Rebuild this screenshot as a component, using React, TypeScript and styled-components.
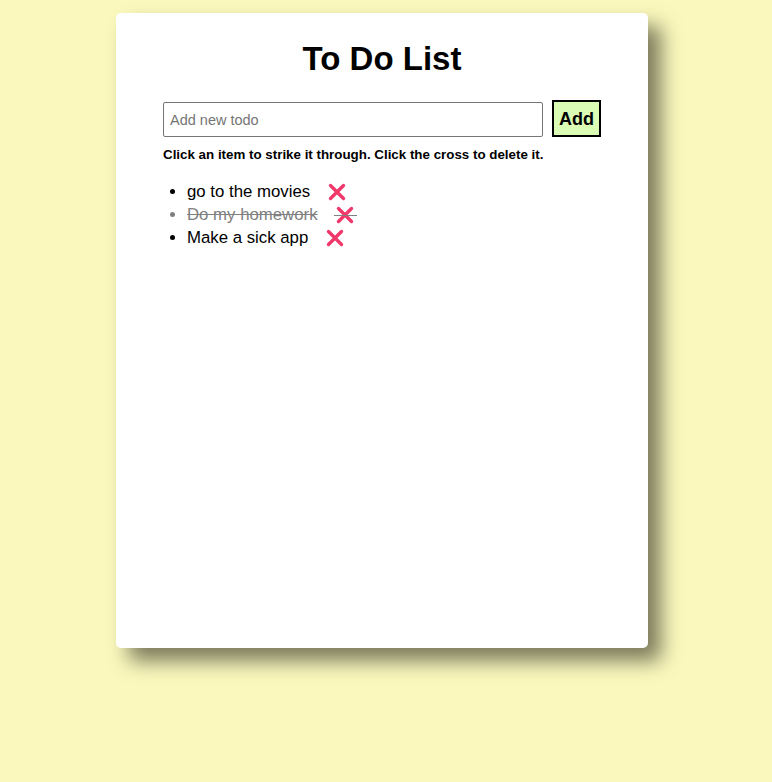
import React, { useState } from "react";
import styled, { createGlobalStyle } from "styled-components";

const GlobalStyle = createGlobalStyle`
  html, body {
    margin: 0;
    padding: 0;
    background: #fbf8bd;
    font-family: "Liberation Sans", Arial, sans-serif;
  }
`;

const Page = styled.div`
  min-height: 782px;
  padding-top: 13px;
  box-sizing: border-box;
`;

const Card = styled.div`
  width: 532px;
  height: 635px;
  margin-left: 116px;
  box-sizing: border-box;
  background: #ffffff;
  border-radius: 5px;
  padding: 27px 47px 0;
  box-shadow: 13px 13px 20px #7b7b5c;
`;

const Title = styled.h1`
  margin: 0;
  text-align: center;
  font-size: 33px;
  font-weight: bold;
  line-height: 37px;
  color: #000;
`;

const Form = styled.form`
  display: flex;
  align-items: flex-end;
  gap: 9px;
  margin-top: 23px;
`;

const Input = styled.input`
  flex: 1;
  height: 35px;
  box-sizing: border-box;
  border: 1px solid #767676;
  border-radius: 2px;
  padding: 0 6px;
  font-family: "Liberation Sans", Arial, sans-serif;
  font-size: 14.5px;
  color: #000;
  &::placeholder {
    color: #757575;
  }
`;

const AddButton = styled.button`
  height: 37px;
  box-sizing: border-box;
  border: 2px solid #000;
  border-radius: 0;
  background: #dafcb4;
  padding: 1px 5px 0;
  font-family: "Liberation Sans", Arial, sans-serif;
  font-size: 18px;
  font-weight: bold;
  color: #000;
  cursor: pointer;
`;

const Hint = styled.p`
  margin: 10px 0 0;
  font-size: 13.35px;
  line-height: 15px;
  font-weight: bold;
  color: #000;
`;

const List = styled.ul`
  margin: 18px 0 0;
  padding-left: 24px;
`;

const Item = styled.li<{ $done: boolean }>`
  font-size: 16.8px;
  line-height: 23px;
  color: ${(p) => (p.$done ? "#808080" : "#000")};
  cursor: pointer;
`;

const Text = styled.span<{ $done: boolean }>`
  text-decoration: ${(p) => (p.$done ? "line-through" : "none")};
`;

const Cross = styled.span<{ $done: boolean }>`
  position: relative;
  display: inline-block;
  margin-left: 16px;
  padding: 0 2px;
  height: 23px;
  vertical-align: top;
  svg {
    display: block;
    margin-top: 3px;
  }
  &::after {
    content: "";
    display: ${(p) => (p.$done ? "block" : "none")};
    position: absolute;
    left: 0;
    right: -1px;
    top: 12px;
    height: 1px;
    background: #808080;
  }
`;

const CrossIcon = () => (
  <svg width="18" height="18" viewBox="0 0 18 18" aria-hidden="true">
    <path
      d="M2.5 2.5 L15.5 15.5 M15.5 2.5 L2.5 15.5"
      stroke="#f0386b"
      strokeWidth="3.4"
      strokeLinecap="round"
      fill="none"
    />
  </svg>
);

type Todo = { text: string; done: boolean };

export default function App() {
  const [todos, setTodos] = useState<Todo[]>([
    { text: "go to the movies", done: false },
    { text: "Do my homework", done: true },
    { text: "Make a sick app", done: false },
  ]);
  const [value, setValue] = useState("");

  const add = (e: React.FormEvent) => {
    e.preventDefault();
    if (!value.trim()) return;
    setTodos([...todos, { text: value.trim(), done: false }]);
    setValue("");
  };

  return (
    <Page>
      <GlobalStyle />
      <Card>
        <Title>To Do List</Title>
        <Form onSubmit={add}>
          <Input
            placeholder="Add new todo"
            value={value}
            onChange={(e) => setValue(e.target.value)}
          />
          <AddButton type="submit">Add</AddButton>
        </Form>
        <Hint>Click an item to strike it through. Click the cross to delete it.</Hint>
        <List>
          {todos.map((t, i) => (
            <Item
              key={i}
              $done={t.done}
              onClick={() =>
                setTodos(todos.map((x, j) => (j === i ? { ...x, done: !x.done } : x)))
              }
            >
              <Text $done={t.done}>{t.text}</Text>
              <Cross
                $done={t.done}
                title="Delete"
                onClick={(e) => {
                  e.stopPropagation();
                  setTodos(todos.filter((_, j) => j !== i));
                }}
              >
                <CrossIcon />
              </Cross>
            </Item>
          ))}
        </List>
      </Card>
    </Page>
  );
}
